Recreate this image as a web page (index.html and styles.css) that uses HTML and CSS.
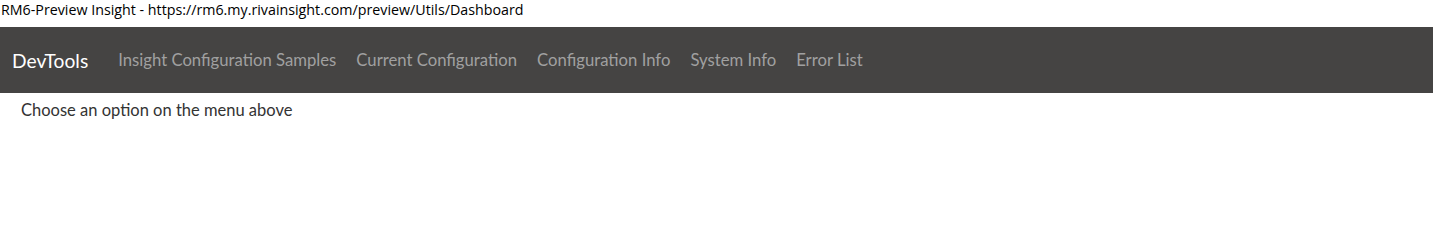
FILE: index.html
```html
<!DOCTYPE html>
<html>
<head>
<meta charset="utf-8">
<link rel="stylesheet" href="styles.css">
</head>
<body>
<div class="title">RM6-Preview Insight - https://rm6.my.rivainsight.com/preview/Utils/Dashboard</div>
<nav class="navbar">
  <a class="brand" href="#">DevTools</a>
  <ul class="nav">
    <li><a href="#">Insight Configuration Samples</a></li>
    <li><a href="#">Current Configuration</a></li>
    <li><a href="#">Configuration Info</a></li>
    <li><a href="#">System Info</a></li>
    <li><a href="#">Error List</a></li>
  </ul>
</nav>
<main class="content">
  <p>Choose an option on the menu above</p>
</main>
</body>
</html>
```
FILE: styles.css
```css
html, body {
  margin: 0;
  padding: 0;
  background: #fff;
}
.title {
  font-family: "Open Sans", "Noto Sans", sans-serif;
  font-size: 14.25px;
  color: #000;
  height: 27px;
  line-height: 19px;
  padding-left: 1px;
}
.navbar {
  height: 66px;
  background: #454443;
  display: flex;
  align-items: center;
  padding-left: 12px;
  font-family: "Lato", "Noto Sans", sans-serif;
}
.brand {
  color: #fff;
  font-size: 19.2px;
  text-decoration: none;
  margin-right: 20px;
}
.nav {
  display: flex;
  list-style: none;
  margin: 0;
  padding: 0;
}
.nav a {
  display: block;
  padding: 0 10px;
  color: #a0a0a0;
  font-size: 16.7px;
  text-decoration: none;
}
.content {
  padding: 0 21px;
  font-family: "Lato", "Noto Sans", sans-serif;
  font-size: 16.5px;
  color: #333;
}
.content p {
  margin: 7px 0 0;
}
```
